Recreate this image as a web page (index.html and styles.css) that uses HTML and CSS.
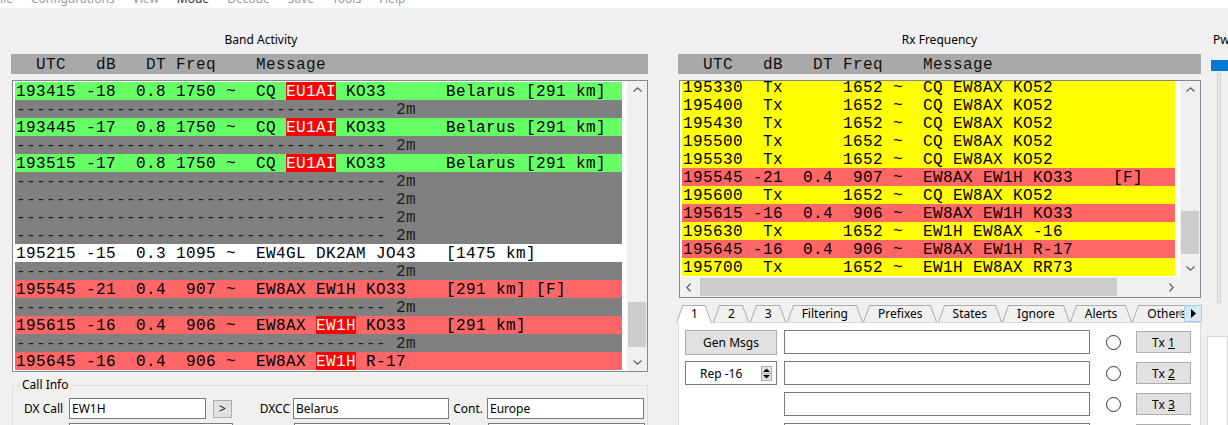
FILE: index.html
```html
<!DOCTYPE html>
<html lang="en">
<head>
<meta charset="utf-8">
<title>WSJT-X</title>
<link rel="stylesheet" href="styles.css">
</head>
<body>
<div class="menubar">
  <div class="menus">
    <span>ile</span><span>Configurations</span><span>View</span><span class="cur">Mode</span><span>Decode</span><span>Save</span><span>Tools</span><span>Help</span>
  </div>
</div>
<div class="main">
  <section class="left">
    <div class="title ba">Band Activity</div>
    <div class="hdr">  UTC   dB   DT Freq    Message</div>
    <div class="list">
      <div class="rows">
        <div class="row g">193415 -18  0.8 1750 ~  CQ <span class="hl">EU1AI</span> KO33      Belarus [291 km]</div>
        <div class="row s">------------------------------------- 2m</div>
        <div class="row g">193445 -17  0.8 1750 ~  CQ <span class="hl">EU1AI</span> KO33      Belarus [291 km]</div>
        <div class="row s">------------------------------------- 2m</div>
        <div class="row g">193515 -17  0.8 1750 ~  CQ <span class="hl">EU1AI</span> KO33      Belarus [291 km]</div>
        <div class="row s">------------------------------------- 2m</div>
        <div class="row s">------------------------------------- 2m</div>
        <div class="row s">------------------------------------- 2m</div>
        <div class="row s">------------------------------------- 2m</div>
        <div class="row w">195215 -15  0.3 1095 ~  EW4GL DK2AM JO43   [1475 km]</div>
        <div class="row s">------------------------------------- 2m</div>
        <div class="row r">195545 -21  0.4  907 ~  EW8AX EW1H KO33    [291 km] [F]</div>
        <div class="row s">------------------------------------- 2m</div>
        <div class="row r">195615 -16  0.4  906 ~  EW8AX <span class="hl">EW1H</span> KO33    [291 km]</div>
        <div class="row s">------------------------------------- 2m</div>
        <div class="row r">195645 -16  0.4  906 ~  EW8AX <span class="hl">EW1H</span> R-17</div>
      </div>
      <div class="vs">
        <div class="arr"><svg width="9" height="5" viewBox="0 0 9 5"><polyline points="0.5,4.5 4.5,0.8 8.5,4.5" fill="none" stroke="#606060" stroke-width="1.2"/></svg></div>
        <div class="track"><div class="thumb ba"></div></div>
        <div class="arr"><svg width="9" height="5" viewBox="0 0 9 5"><polyline points="0.5,0.5 4.5,4.2 8.5,0.5" fill="none" stroke="#606060" stroke-width="1.2"/></svg></div>
      </div>
    </div>
    <fieldset class="group">
      <legend>Call Info</legend>
      <div class="crow">
        <span class="lab l-dx">DX Call</span>
        <div class="field f-dx">EW1H</div>
        <button class="go">&gt;</button>
        <span class="lab l-dxcc">DXCC</span>
        <div class="field f-dxcc">Belarus</div>
        <span class="lab l-cont">Cont.</span>
        <div class="field f-cont">Europe</div>
      </div>
      <div class="crow">
        <span class="lab l-dx"></span>
        <div class="field f-grid"></div>
        <span class="lab l-dxcc2"></span>
        <div class="field f-dxcc"></div>
        <span class="lab l-cont"></span>
        <div class="field f-cont"></div>
      </div>
    </fieldset>
  </section>

  <section class="right">
    <div class="title">Rx Frequency</div>
    <div class="hdr">  UTC   dB   DT Freq    Message</div>
    <div class="rxlist">
      <div class="rxview">
        <div class="rxrows">
          <div class="row y">195330  Tx      1652 ~  CQ EW8AX KO52</div>
          <div class="row y">195400  Tx      1652 ~  CQ EW8AX KO52</div>
          <div class="row y">195430  Tx      1652 ~  CQ EW8AX KO52</div>
          <div class="row y">195500  Tx      1652 ~  CQ EW8AX KO52</div>
          <div class="row y">195530  Tx      1652 ~  CQ EW8AX KO52</div>
          <div class="row r">195545 -21  0.4  907 ~  EW8AX EW1H KO33    [F]</div>
          <div class="row y">195600  Tx      1652 ~  CQ EW8AX KO52</div>
          <div class="row r">195615 -16  0.4  906 ~  EW8AX EW1H KO33</div>
          <div class="row y">195630  Tx      1652 ~  EW1H EW8AX -16</div>
          <div class="row r">195645 -16  0.4  906 ~  EW8AX EW1H R-17</div>
          <div class="row y">195700  Tx      1652 ~  EW1H EW8AX RR73</div>
        </div>
      </div>
      <div class="vs">
        <div class="arr"><svg width="9" height="5" viewBox="0 0 9 5"><polyline points="0.5,4.5 4.5,0.8 8.5,4.5" fill="none" stroke="#606060" stroke-width="1.2"/></svg></div>
        <div class="track"><div class="thumb rx"></div></div>
        <div class="arr"><svg width="9" height="5" viewBox="0 0 9 5"><polyline points="0.5,0.5 4.5,4.2 8.5,0.5" fill="none" stroke="#606060" stroke-width="1.2"/></svg></div>
      </div>
      <div class="hs">
        <div class="harr"><svg width="5" height="9" viewBox="0 0 5 9"><polyline points="4.5,0.5 0.8,4.5 4.5,8.5" fill="none" stroke="#606060" stroke-width="1.2"/></svg></div>
        <div class="htrack"><div class="hthumb"></div></div>
        <div class="harr"><svg width="5" height="9" viewBox="0 0 5 9"><polyline points="0.5,0.5 4.2,4.5 0.5,8.5" fill="none" stroke="#606060" stroke-width="1.2"/></svg></div>
      </div>
      <div class="corner"></div>
    </div>

    <div class="tabs">
      <div class="tab active">1</div>
      <div class="tab">2</div>
      <div class="tab">3</div>
      <div class="tab">Filtering</div>
      <div class="tab">Prefixes</div>
      <div class="tab">States</div>
      <div class="tab">Ignore</div>
      <div class="tab">Alerts</div>
      <div class="tab">Others</div>
      <div class="tabscroll">
        <span class="ts-l"><svg width="5" height="9" viewBox="0 0 5 9"><polygon points="5,0 0,4.5 5,9" fill="#b0b0b0"/></svg></span>
        <span class="ts-r"><svg width="5" height="9" viewBox="0 0 5 9"><polygon points="0,0 5,4.5 0,9" fill="#000"/></svg></span>
      </div>
    </div>
    <div class="pane">
      <div class="prow">
        <button class="btn gen">Gen Msgs</button>
        <div class="field msg"></div>
        <span class="radio"></span>
        <button class="btn tx">Tx <u>1</u></button>
      </div>
      <div class="prow">
        <div class="spin"><span class="spin-t">Rep -16</span><span class="spin-b"><svg width="9" height="13" viewBox="0 0 9 13"><polygon points="4.5,1.5 8,5 1,5" fill="#000"/><polygon points="1,8 8,8 4.5,11.5" fill="#000"/><line x1="0" y1="6.5" x2="9" y2="6.5" stroke="#adadad"/></svg></span></div>
        <div class="field msg"></div>
        <span class="radio"></span>
        <button class="btn tx">Tx <u>2</u></button>
      </div>
      <div class="prow">
        <div class="spacer"></div>
        <div class="field msg"></div>
        <span class="radio"></span>
        <button class="btn tx">Tx <u>3</u></button>
      </div>
      <div class="prow">
        <div class="spacer"></div>
        <div class="field msg"></div>
        <span class="radio"></span>
        <button class="btn tx">Tx <u>4</u></button>
      </div>
    </div>
  </section>

  <aside class="pwr">
    <div class="pw">Pwr</div>
    <div class="slider">
      <div class="handle"></div>
      <div class="groove"></div>
    </div>
    <div class="pbox"></div>
  </aside>
</div>
</body>
</html>
```

FILE: styles.css
```css
* { box-sizing: border-box; }
html, body { margin: 0; padding: 0; }
body {
  width: 1228px;
  height: 425px;
  overflow: hidden;
  background: #f0f0f0;
  font-family: "Noto Sans", "Open Sans", sans-serif;
  font-size: 12px;
  color: #000;
}

/* menu bar (cut off at top) */
.menubar { height: 8px; background: #fff; overflow: hidden; }
.menus { display: flex; gap: 18px; margin-top: -9px; line-height: 16px; color: #9a9a9a; }
.menus .cur { color: #333; }

.main { display: flex; align-items: flex-start; height: 417px; overflow: hidden; }

.left { width: 637px; margin-left: 11px; }
.right { width: 523px; margin-left: 30px; }
.pwr { width: 21px; margin-left: 6px; }

.title { height: 46px; padding-top: 24px; line-height: 16px; text-align: center; }
.title.ba { padding-right: 137px; }

.hdr, .row {
  font-family: "Liberation Mono", "DejaVu Sans Mono", monospace;
  font-size: 16px;
  letter-spacing: 0.4px;
  white-space: pre;
}
.hdr { height: 20px; line-height: 22px; background: #a9a9a9; padding-left: 5px; color: #111; overflow: hidden; }

/* decoded lists */
.list {
  margin: 6px 0 0 1px;
  height: 292px;
  border: 1px solid #828790;
  background: #fff;
  display: flex;
}
.rows { width: 607px; margin: 1px 0 0 2px; overflow: hidden; }
.row { height: 18px; line-height: 20px; padding-left: 1px; color: #000; overflow: hidden; }
.row.g { background: #66ff66; }
.row.s { background: #808080; color: #1e1e1e; }
.row.w { background: #fff; }
.row.r { background: #ff6666; }
.row.y { background: #ffff00; }
.hl { display: inline-block; height: 18px; background: #ff0000; color: #fff; vertical-align: top; }

/* scrollbars */
.vs { width: 20px; margin-left: auto; background: #f0f0f0; display: flex; flex-direction: column; }
.arr { height: 17px; display: flex; align-items: center; justify-content: center; }
.track { flex: 1; }
.thumb { background: #cdcdcd; margin: 0 1px; }
.thumb.ba { margin-top: 204px; height: 45px; }
.thumb.rx { margin-top: 113px; height: 43px; }

.rxlist {
  margin: 6px 0 0 1px;
  height: 218px;
  border: 1px solid #828790;
  background: #fff;
  display: grid;
  grid-template-columns: 1fr 20px;
  grid-template-rows: 1fr 20px;
}
.rxview { margin: 0 5px 0 2px; overflow: hidden; }
.rxrows { margin-top: -3px; }
.rxlist .vs { margin-left: 0; }
.hs { background: #f0f0f0; display: flex; }
.harr { width: 17px; display: flex; align-items: center; justify-content: center; }
.htrack { flex: 1; padding: 1px 0; }
.hthumb { margin-left: 3px; width: 417px; height: 18px; background: #cdcdcd; }
.corner { background: #f0f0f0; }

/* call info group */
.group {
  margin: 5px 0 0 1px;
  width: 636px;
  min-width: 0;
  height: 48px;
  padding: 0 0 0 7px;
  border: 1px solid #dcdcdc;
  border-bottom: none;
}
.group legend { padding: 0 2px; line-height: 16px; }
.crow { display: flex; align-items: center; height: 21px; margin-top: 5px; }
.crow + .crow { margin-top: 4px; }
.lab { display: block; flex: none; }
.l-dx { width: 49px; padding-left: 4px; }
.l-dxcc { width: 61px; text-align: right; padding-right: 3px; }
.l-dxcc2 { width: 61px; }
.l-cont { width: 38px; text-align: right; padding-right: 4px; }
.field {
  flex: none;
  height: 21px;
  line-height: 19px;
  background: #fff;
  border: 1px solid #7a7a7a;
  padding-left: 2px;
  white-space: nowrap;
  overflow: hidden;
}
.f-dx { width: 137px; }
.f-grid { width: 164px; }
.f-dxcc { width: 156px; }
.f-cont { width: 157px; }
.go {
  flex: none;
  margin-left: 7px;
  width: 19px;
  height: 18px;
  padding: 0;
  font: inherit;
  line-height: 16px;
  background: #e1e1e1;
  border: 1px solid #adadad;
}

/* tabs */
.tabs { display: flex; height: 17px; margin: 7px 0 0 -2px; position: relative; z-index: 1; }
.tab { position: relative; z-index: 0; height: 17px; line-height: 17px; padding: 0 15px; white-space: nowrap; }
.tab::before, .tab::after {
  content: "";
  position: absolute;
  top: 0;
  bottom: 0;
  width: 50%;
  border-top: 1px solid #acacac;
  background: #f0f0f0;
  z-index: -1;
}
.tab::before { left: 0; border-left: 1px solid #acacac; transform: skewX(-20deg); transform-origin: 0 100%; }
.tab::after { right: 0; border-right: 1px solid #acacac; transform: skewX(20deg); transform-origin: 100% 100%; }
.tab.active { height: 18px; margin-bottom: -1px; z-index: 2; }
.tab.active::before, .tab.active::after { background: #fff; }
.tabscroll {
  position: absolute;
  right: -1px;
  top: 0;
  height: 17px;
  display: flex;
  z-index: 3;
}
.tabscroll span { height: 17px; display: flex; align-items: center; justify-content: center; }
.tabscroll .ts-l { width: 10px; }
.tabscroll .ts-r { width: 18px; background: #d5e8f8; border: 1px solid #a6cdef; }

.pane {
  height: 103px;
  background: #fff;
  border: 1px solid #d9d9d9;
  border-bottom: none;
  padding: 7px 0 0 6px;
  overflow: hidden;
}
.prow { display: flex; align-items: center; height: 24px; margin-bottom: 7px; }
.btn {
  flex: none;
  font: inherit;
  color: #000;
  background: #e1e1e1;
  border: 1px solid #adadad;
  padding: 0;
}
.gen { width: 92px; height: 25px; }
.spin {
  flex: none;
  width: 92px;
  height: 24px;
  border: 1px solid #7a7a7a;
  background: #fff;
  display: flex;
  align-items: center;
}
.spin-t { flex: 1; padding-left: 14px; }
.spin-b { width: 11px; height: 15px; margin-right: 4px; border: 1px solid #adadad; background: #e5e5e5; display: flex; align-items: center; justify-content: center; }
.spacer { flex: none; width: 92px; }
.msg { width: 306px; height: 24px; margin-left: 7px; }
.radio { flex: none; width: 15px; height: 15px; margin-left: 16px; border: 1px solid #333; border-radius: 50%; background: #fff; }
.tx { width: 55px; height: 22px; margin-left: 15px; }

/* power slider */
.pw { height: 46px; padding-top: 24px; line-height: 16px; padding-left: 6px; white-space: nowrap; overflow: hidden; }
.slider { height: 270px; }
.handle { margin: 6px 0 0 4px; height: 11px; background: #0078d7; }
.groove { margin: 2px 0 0 10px; width: 4px; height: 230px; border: 1px solid #d6d6d6; background: #e7e7e7; }
.pbox { margin-top: 6px; height: 95px; border: 1px solid #d9d9d9; border-bottom: none; background: #fff; }
```
